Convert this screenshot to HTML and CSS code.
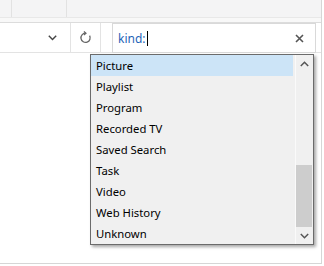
FILE: index.html
```html
<!DOCTYPE html>
<html>
<head>
<meta charset="utf-8">
<link rel="stylesheet" href="styles.css">
</head>
<body>
<div class="win">
  <div class="tabs">
    <div class="tab t1"></div>
    <div class="tab t2"></div>
  </div>
  <div class="strip"></div>
  <div class="addrrow">
    <div class="addr">
      <svg class="chev" width="9" height="6" viewBox="0 0 9 6"><polyline points="0.8,0.8 4.5,4.6 8.2,0.8" fill="none" stroke="#444" stroke-width="1.4"/></svg>
    </div>
    <div class="refresh">
      <svg width="13" height="13" viewBox="0 0 13 13"><path d="M6.5 2.2 A4.6 4.6 0 1 0 10.6 4.6" fill="none" stroke="#666" stroke-width="1.3"/><polyline points="4.9,0.6 6.9,2.2 4.9,3.9" fill="none" stroke="#666" stroke-width="1.3"/></svg>
    </div>
    <div class="search">
      <span class="kw">kind:</span><span class="caret"></span>
      <svg class="clear" width="9" height="9" viewBox="0 0 9 9"><path d="M1 1 L8 8 M8 1 L1 8" stroke="#555" stroke-width="1.6"/></svg>
    </div>
  </div>
  <div class="content"></div>

  <div class="dropdown">
    <ul class="list">
      <li class="item sel">Picture</li>
      <li class="item">Playlist</li>
      <li class="item">Program</li>
      <li class="item">Recorded TV</li>
      <li class="item">Saved Search</li>
      <li class="item">Task</li>
      <li class="item">Video</li>
      <li class="item">Web History</li>
      <li class="item">Unknown</li>
    </ul>
    <div class="sbar">
      <div class="sbtn">
        <svg width="9" height="6" viewBox="0 0 9 6"><polyline points="0.8,5 4.5,1.3 8.2,5" fill="none" stroke="#555" stroke-width="1.5"/></svg>
      </div>
      <div class="track"><div class="thumb"></div></div>
      <div class="sbtn">
        <svg width="9" height="6" viewBox="0 0 9 6"><polyline points="0.8,1 4.5,4.7 8.2,1" fill="none" stroke="#555" stroke-width="1.5"/></svg>
      </div>
    </div>
  </div>
</div>
</body>
</html>
```

FILE: styles.css
```css
* { box-sizing: border-box; }
html, body { margin: 0; padding: 0; background: #fff; }
body {
  font-family: "Noto Sans", "DejaVu Sans", sans-serif;
  font-size: 11.3px;
  color: #000;
  width: 324px;
  height: 266px;
  overflow: hidden;
}
.win {
  position: relative;
  width: 322px;
  height: 264px;
  border-right: 1px solid #d6d6d6;
  border-bottom: 1px solid #d6d6d6;
  display: flex;
  flex-direction: column;
}
.tabs {
  height: 18px;
  background: #f4f4f5;
  border-bottom: 1px solid #e8e8e8;
  display: flex;
}
.tab { height: 17px; border-right: 1px solid #e2e2e2; }
.t1 { width: 12px; }
.t2 { width: 55px; }
.strip {
  height: 5px;
  background: #f8f8f8;
  border-bottom: 1px solid #dcdcdc;
}
.addrrow {
  height: 30px;
  display: flex;
  border-bottom: 1px solid #e3e3e3;
}
.addr {
  width: 71px;
  height: 29px;
  border-right: 1px solid #e3e3e3;
  display: flex;
  align-items: center;
  justify-content: flex-end;
  padding-right: 13px;
}
.refresh {
  width: 30px;
  height: 29px;
  border-right: 1px solid #e3e3e3;
  display: flex;
  align-items: center;
  justify-content: center;
}
.search {
  margin-left: 11px;
  width: 204px;
  height: 30px;
  border: 1px solid #d9d9d9;
  background: #fff;
  display: flex;
  align-items: center;
  padding-left: 5px;
  font-size: 12px;
}
.kw { color: #1f65b8; }
.caret {
  width: 1px;
  height: 15px;
  background: #000;
  margin-left: 1px;
}
.clear { margin-left: auto; margin-right: 11px; }
.content { flex: 1; }

.dropdown {
  position: absolute;
  left: 90px;
  top: 54px;
  width: 224px;
  height: 191px;
  border: 1px solid #6b6b6b;
  background: #f0f0f0;
  box-shadow: 2px 2px 3px rgba(0,0,0,0.35);
  display: flex;
}
.list {
  list-style: none;
  margin: 0;
  padding: 0;
  flex: 1;
}
.item {
  height: 21px;
  line-height: 21px;
  padding-left: 5px;
  margin-right: 2px;
  white-space: nowrap;
}
.item.sel { background: #cce4f7; }
.sbar {
  width: 18px;
  display: flex;
  flex-direction: column;
  border-left: 1px solid #fafafa;
}
.sbtn {
  height: 17px;
  display: flex;
  align-items: center;
  justify-content: center;
}
.track {
  flex: 1;
  display: flex;
  flex-direction: column;
  justify-content: flex-end;
  padding: 0 1px 0 0;
}
.thumb {
  height: 62px;
  background: #cdcdcd;
}
```
